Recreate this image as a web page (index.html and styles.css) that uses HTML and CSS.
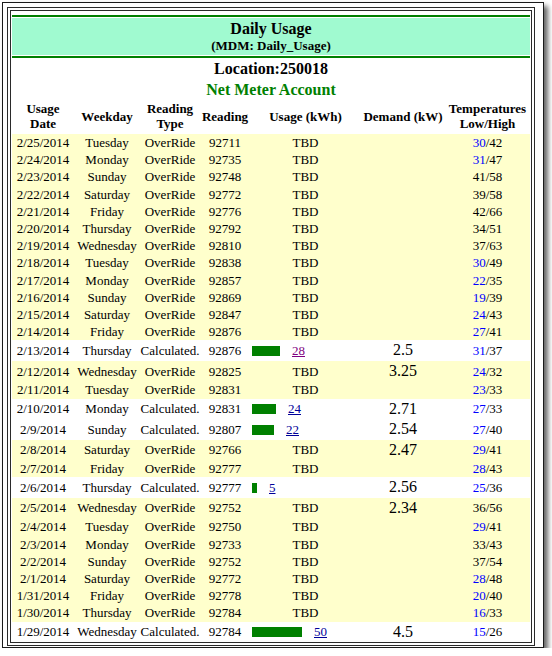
FILE: index.html
```html
<!DOCTYPE html>
<html>
<head>
<meta charset="utf-8">
<link rel="stylesheet" href="styles.css">
</head>
<body>
<div class="frame">
  <div class="box">
    <div class="cell">
      <div class="band">
        <div class="band-inner">
          <div class="title">Daily Usage</div>
          <div class="subtitle">(MDM: Daily_Usage)</div>
        </div>
      </div>
      <div class="location">Location:250018</div>
      <div class="account">Net Meter Account</div>
      <table class="data">
        <colgroup>
          <col class="c-date"><col class="c-day"><col class="c-type"><col class="c-read"><col class="c-usage"><col class="c-demand"><col class="c-temp">
        </colgroup>
        <thead>
          <tr><th>Usage<br>Date</th><th>Weekday</th><th>Reading<br>Type</th><th>Reading</th><th>Usage (kWh)</th><th>Demand (kW)</th><th>Temperatures<br>Low/High</th></tr>
        </thead>
        <tbody>
          <tr class="ovr"><td>2/25/2014</td><td>Tuesday</td><td>OverRide</td><td>92711</td><td>TBD</td><td></td><td><span class="lo">30</span>/42</td></tr>
          <tr class="ovr"><td>2/24/2014</td><td>Monday</td><td>OverRide</td><td>92735</td><td>TBD</td><td></td><td><span class="lo">31</span>/47</td></tr>
          <tr class="ovr"><td>2/23/2014</td><td>Sunday</td><td>OverRide</td><td>92748</td><td>TBD</td><td></td><td>41/58</td></tr>
          <tr class="ovr"><td>2/22/2014</td><td>Saturday</td><td>OverRide</td><td>92772</td><td>TBD</td><td></td><td>39/58</td></tr>
          <tr class="ovr"><td>2/21/2014</td><td>Friday</td><td>OverRide</td><td>92776</td><td>TBD</td><td></td><td>42/66</td></tr>
          <tr class="ovr"><td>2/20/2014</td><td>Thursday</td><td>OverRide</td><td>92792</td><td>TBD</td><td></td><td>34/51</td></tr>
          <tr class="ovr"><td>2/19/2014</td><td>Wednesday</td><td>OverRide</td><td>92810</td><td>TBD</td><td></td><td>37/63</td></tr>
          <tr class="ovr"><td>2/18/2014</td><td>Tuesday</td><td>OverRide</td><td>92838</td><td>TBD</td><td></td><td><span class="lo">30</span>/49</td></tr>
          <tr class="ovr"><td>2/17/2014</td><td>Monday</td><td>OverRide</td><td>92857</td><td>TBD</td><td></td><td><span class="lo">22</span>/35</td></tr>
          <tr class="ovr"><td>2/16/2014</td><td>Sunday</td><td>OverRide</td><td>92869</td><td>TBD</td><td></td><td><span class="lo">19</span>/39</td></tr>
          <tr class="ovr"><td>2/15/2014</td><td>Saturday</td><td>OverRide</td><td>92847</td><td>TBD</td><td></td><td><span class="lo">24</span>/43</td></tr>
          <tr class="ovr"><td>2/14/2014</td><td>Friday</td><td>OverRide</td><td>92876</td><td>TBD</td><td></td><td><span class="lo">27</span>/41</td></tr>
          <tr class="calc"><td>2/13/2014</td><td>Thursday</td><td>Calculated.</td><td>92876</td><td class="use"><span class="bar" style="width:28px"></span><a class="visited" href="#">28</a></td><td class="dem">2.5</td><td><span class="lo">31</span>/37</td></tr>
          <tr class="ovr"><td>2/12/2014</td><td>Wednesday</td><td>OverRide</td><td>92825</td><td>TBD</td><td class="dem">3.25</td><td><span class="lo">24</span>/32</td></tr>
          <tr class="ovr"><td>2/11/2014</td><td>Tuesday</td><td>OverRide</td><td>92831</td><td>TBD</td><td></td><td><span class="lo">23</span>/33</td></tr>
          <tr class="calc"><td>2/10/2014</td><td>Monday</td><td>Calculated.</td><td>92831</td><td class="use"><span class="bar" style="width:24px"></span><a href="#">24</a></td><td class="dem">2.71</td><td><span class="lo">27</span>/33</td></tr>
          <tr class="calc"><td>2/9/2014</td><td>Sunday</td><td>Calculated.</td><td>92807</td><td class="use"><span class="bar" style="width:22px"></span><a href="#">22</a></td><td class="dem">2.54</td><td><span class="lo">27</span>/40</td></tr>
          <tr class="ovr"><td>2/8/2014</td><td>Saturday</td><td>OverRide</td><td>92766</td><td>TBD</td><td class="dem">2.47</td><td><span class="lo">29</span>/41</td></tr>
          <tr class="ovr"><td>2/7/2014</td><td>Friday</td><td>OverRide</td><td>92777</td><td>TBD</td><td></td><td><span class="lo">28</span>/43</td></tr>
          <tr class="calc"><td>2/6/2014</td><td>Thursday</td><td>Calculated.</td><td>92777</td><td class="use"><span class="bar" style="width:5px"></span><a href="#">5</a></td><td class="dem">2.56</td><td><span class="lo">25</span>/36</td></tr>
          <tr class="ovr"><td>2/5/2014</td><td>Wednesday</td><td>OverRide</td><td>92752</td><td>TBD</td><td class="dem">2.34</td><td>36/56</td></tr>
          <tr class="ovr"><td>2/4/2014</td><td>Tuesday</td><td>OverRide</td><td>92750</td><td>TBD</td><td></td><td><span class="lo">29</span>/41</td></tr>
          <tr class="ovr"><td>2/3/2014</td><td>Monday</td><td>OverRide</td><td>92733</td><td>TBD</td><td></td><td>33/43</td></tr>
          <tr class="ovr"><td>2/2/2014</td><td>Sunday</td><td>OverRide</td><td>92752</td><td>TBD</td><td></td><td>37/54</td></tr>
          <tr class="ovr"><td>2/1/2014</td><td>Saturday</td><td>OverRide</td><td>92772</td><td>TBD</td><td></td><td><span class="lo">28</span>/48</td></tr>
          <tr class="ovr"><td>1/31/2014</td><td>Friday</td><td>OverRide</td><td>92778</td><td>TBD</td><td></td><td><span class="lo">20</span>/40</td></tr>
          <tr class="ovr"><td>1/30/2014</td><td>Thursday</td><td>OverRide</td><td>92784</td><td>TBD</td><td></td><td><span class="lo">16</span>/33</td></tr>
          <tr class="calc"><td>1/29/2014</td><td>Wednesday</td><td>Calculated.</td><td>92784</td><td class="use"><span class="bar" style="width:50px"></span><a href="#">50</a></td><td class="dem">4.5</td><td><span class="lo">15</span>/26</td></tr>
        </tbody>
      </table>
    </div>
  </div>
</div>
</body>
</html>
```
FILE: styles.css
```css
html, body {
  margin: 0;
  padding: 0;
  background: #ffffff;
}
body {
  font-family: "Liberation Serif", "Times New Roman", serif;
  color: #000;
}
.frame {
  margin: 2px 0 0 2px;
  width: 540px;
  height: 644px;
  border: 1px solid #1a1a1a;
  box-shadow: 4px 4px 5px rgba(0, 0, 0, 0.6);
  overflow: hidden;
  background: #fff;
}
.box {
  margin: 4px 0 0 4px;
  width: 522px;
  border: 1px solid #2a2a2a;
  padding: 2px;
}
.cell {
  border: 1px solid #2a2a2a;
  padding: 4px 1px 0 1px;
}
.band {
  border-top: 2px solid #008000;
  border-bottom: 2px solid #008000;
  padding: 1px 0;
}
.band-inner {
  background: #a0fad0;
  padding: 2px 0;
  text-align: center;
  font-weight: bold;
}
.title {
  font-size: 16px;
  line-height: 18px;
}
.subtitle {
  font-size: 13px;
  line-height: 15px;
}
.location, .account {
  text-align: center;
  font-weight: bold;
  font-size: 16px;
  line-height: 21px;
}
.account {
  color: #008000;
}
.data {
  width: 518px;
  border-collapse: collapse;
  border-spacing: 0;
  table-layout: fixed;
  font-size: 13px;
}
.c-date { width: 62px; }
.c-day { width: 66px; }
.c-type { width: 60px; }
.c-read { width: 50px; }
.c-usage { width: 111px; }
.c-demand { width: 84px; }
.c-temp { width: 85px; }
.data th {
  font-weight: bold;
  line-height: 15px;
  padding: 1px 0 3px 0;
  text-align: center;
  vertical-align: middle;
  white-space: nowrap;
}
.data td {
  padding: 1px 0;
  line-height: 15.2px;
  text-align: center;
  vertical-align: middle;
  white-space: nowrap;
}
.ovr {
  background: #ffffcc;
}
.calc {
  background: #ffffff;
}
.data td.use {
  text-align: left;
  padding-left: 2px;
}
.bar {
  display: inline-block;
  height: 10px;
  background: #008000;
  vertical-align: -1px;
  margin-right: 12px;
}
.use a {
  color: #000099;
  text-decoration: underline;
}
.use a.visited {
  color: #800080;
}
.data td.dem {
  font-size: 16px;
  line-height: 18.5px;
}
.lo {
  color: #0000ff;
}
```
